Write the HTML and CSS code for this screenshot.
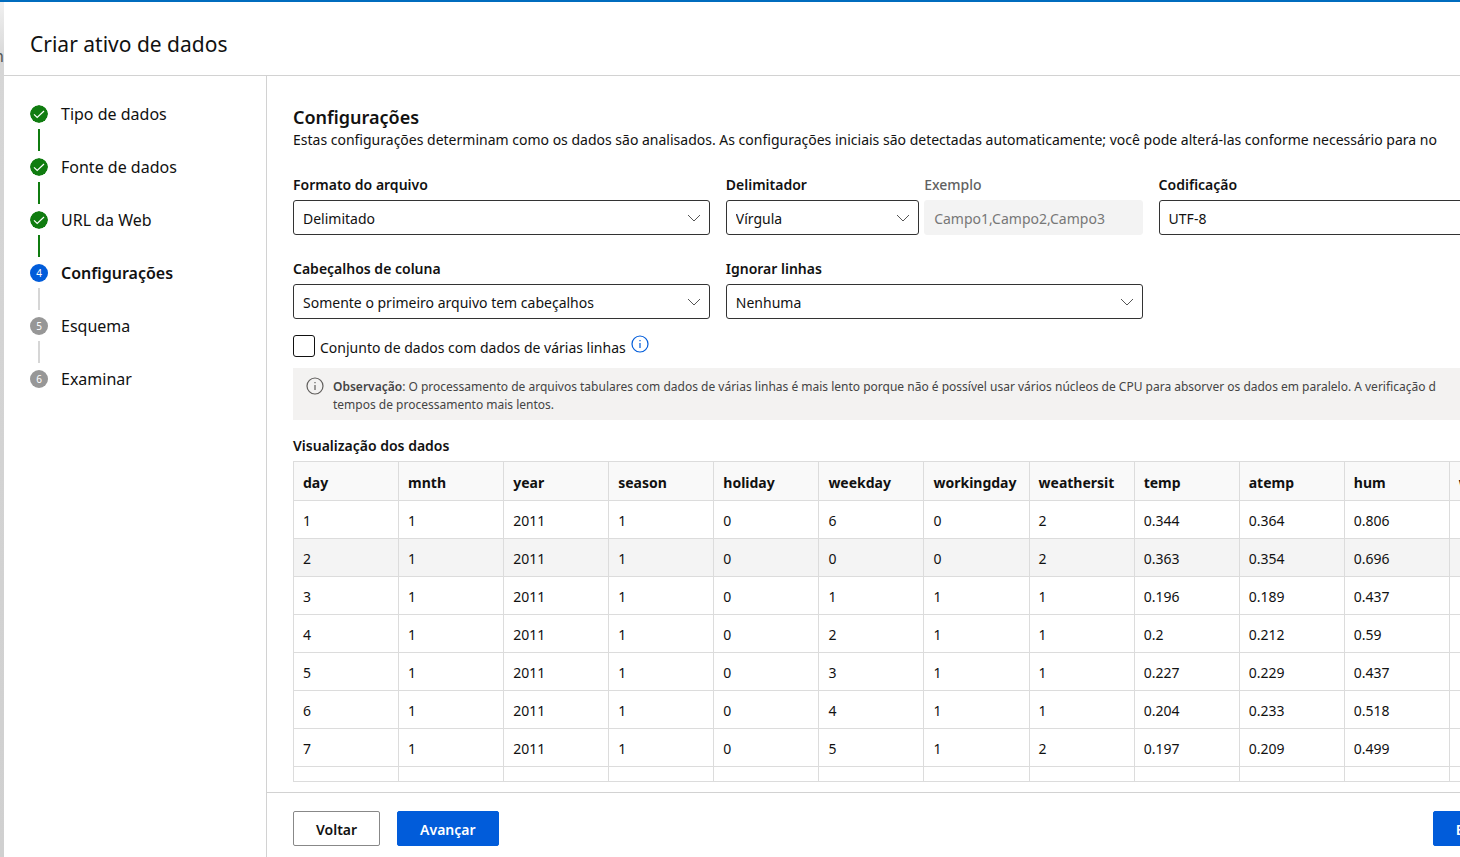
FILE: index.html
```html
<!DOCTYPE html>
<html lang="pt-BR">
<head>
<meta charset="utf-8">
<title>Criar ativo de dados</title>
<link rel="stylesheet" href="styles.css">
</head>
<body>
<svg class="defs" aria-hidden="true">
  <symbol id="check" viewBox="0 0 18 18"><circle cx="9" cy="9" r="9"/><path d="M4 9.300l3.200 3.200L14 6"/></symbol>
  <symbol id="info" viewBox="0 0 18 18"><circle cx="9" cy="9" r="8"/><path d="M9 8v5M9 5v1.300"/></symbol>
</svg>
<div class="app">
  <div class="backdrop"><span class="backdrop-text">h</span></div>
  <div class="panel">
    <header class="panel-header"><h1>Criar ativo de dados</h1></header>
    <div class="panel-body">
      <nav class="sidebar" aria-label="Etapas">
        <ol class="steps">
          <li class="step done"><svg class="dot"><use href="#check"/></svg><span>Tipo de dados</span></li>
          <li class="step done"><svg class="dot"><use href="#check"/></svg><span>Fonte de dados</span></li>
          <li class="step done"><svg class="dot"><use href="#check"/></svg><span>URL da Web</span></li>
          <li class="step current" aria-current="step"><span class="dot">4</span><span>Configurações</span></li>
          <li class="step"><span class="dot">5</span><span>Esquema</span></li>
          <li class="step"><span class="dot">6</span><span>Examinar</span></li>
        </ol>
      </nav>
      <main class="main">
        <section class="content">
          <h2>Configurações</h2>
          <p class="intro">Estas configurações determinam como os dados são analisados. As configurações iniciais são detectadas automaticamente; você pode alterá-las conforme necessário para no</p>
          <form class="fields">
            <div class="field"><label for="format">Formato do arquivo</label><select id="format"><option>Delimitado</option></select></div>
            <div class="pair">
              <div class="field"><label for="delimiter">Delimitador</label><select id="delimiter"><option>Vírgula</option></select></div>
              <div class="field muted"><label for="example">Exemplo</label><input id="example" type="text" value="Campo1,Campo2,Campo3" disabled></div>
            </div>
            <div class="field"><label for="encoding">Codificação</label><select id="encoding"><option>UTF-8</option></select></div>
            <div class="field"><label for="headers">Cabeçalhos de coluna</label><select id="headers"><option>Somente o primeiro arquivo tem cabeçalhos</option></select></div>
            <div class="field"><label for="skip">Ignorar linhas</label><select id="skip"><option>Nenhuma</option></select></div>
          </form>
          <div class="multiline">
            <input id="multiline" type="checkbox"><label for="multiline">Conjunto de dados com dados de várias linhas</label>
            <svg class="info blue"><use href="#info"/></svg>
          </div>
          <div class="note">
            <svg class="info"><use href="#info"/></svg>
            <p><b>Observação</b>: O processamento de arquivos tabulares com dados de várias linhas é mais lento porque não é possível usar vários núcleos de CPU para absorver os dados em paralelo. A verificação d<br>tempos de processamento mais lentos.</p>
          </div>
          <h3>Visualização dos dados</h3>
          <div class="table-wrap">
            <table>
              <thead><tr><th>day</th><th>mnth</th><th>year</th><th>season</th><th>holiday</th><th>weekday</th><th>workingday</th><th>weathersit</th><th>temp</th><th>atemp</th><th>hum</th><th>windspeed</th></tr></thead>
              <tbody>
                <tr><td>1</td><td>1</td><td>2011</td><td>1</td><td>0</td><td>6</td><td>0</td><td>2</td><td>0.344</td><td>0.364</td><td>0.806</td><td></td></tr>
                <tr class="hover"><td>2</td><td>1</td><td>2011</td><td>1</td><td>0</td><td>0</td><td>0</td><td>2</td><td>0.363</td><td>0.354</td><td>0.696</td><td></td></tr>
                <tr><td>3</td><td>1</td><td>2011</td><td>1</td><td>0</td><td>1</td><td>1</td><td>1</td><td>0.196</td><td>0.189</td><td>0.437</td><td></td></tr>
                <tr><td>4</td><td>1</td><td>2011</td><td>1</td><td>0</td><td>2</td><td>1</td><td>1</td><td>0.2</td><td>0.212</td><td>0.59</td><td></td></tr>
                <tr><td>5</td><td>1</td><td>2011</td><td>1</td><td>0</td><td>3</td><td>1</td><td>1</td><td>0.227</td><td>0.229</td><td>0.437</td><td></td></tr>
                <tr><td>6</td><td>1</td><td>2011</td><td>1</td><td>0</td><td>4</td><td>1</td><td>1</td><td>0.204</td><td>0.233</td><td>0.518</td><td></td></tr>
                <tr><td>7</td><td>1</td><td>2011</td><td>1</td><td>0</td><td>5</td><td>1</td><td>2</td><td>0.197</td><td>0.209</td><td>0.499</td><td></td></tr>
                <tr><td></td><td></td><td></td><td></td><td></td><td></td><td></td><td></td><td></td><td></td><td></td><td></td></tr>
              </tbody>
            </table>
          </div>
        </section>
        <footer class="footer">
          <button type="button">Voltar</button>
          <button type="button" class="primary">Avançar</button>
          <button type="button" class="primary last">Enviar</button>
        </footer>
      </main>
    </div>
  </div>
</div>
</body>
</html>
```
FILE: styles.css
```css
* { box-sizing: border-box; }
body {
  margin: 0;
  overflow: hidden;
  background: #fff;
  color: #111;
  font: 14px/20px "Segoe UI", "Noto Sans", sans-serif;
}
h1, h2, h3, p, ol { margin: 0; padding: 0; }
.defs { display: none; }
.app { display: flex; height: 100vh; overflow: hidden; border-top: 2px solid #006cbe; }
.backdrop {
  flex: 0 0 4px;
  overflow: hidden;
  background: linear-gradient(#f0f0f0, #d6d6d6 60px, #d0d0d0);
  display: flex;
  justify-content: flex-end;
  padding-top: 44px;
}
.backdrop-text { color: #555; font-size: 16px; }
.panel { flex: 0 0 109%; display: flex; flex-direction: column; background: #fff; }
.panel-header { padding: 28px 26px 17px; border-bottom: 1px solid #d2d2d2; }
h1 { font-size: 21px; line-height: 28px; font-weight: 400; }
.panel-body { flex: 1; min-height: 0; display: flex; }

.sidebar { flex: 0 0 263px; padding: 29px 26px; border-right: 1px solid #d2d2d2; }
.steps { list-style: none; }
.step {
  display: grid;
  grid-template-columns: 18px 1fr;
  grid-template-rows: 18px 22px;
  row-gap: 6px;
  column-gap: 13px;
  align-items: center;
  height: 53px;
  font-size: 16px;
}
.step:not(:last-child)::after {
  content: "";
  width: 2px;
  height: 22px;
  margin-left: 8px;
  background: #d6d6d6;
}
.step.done::after { background: #107c10; }
.dot {
  width: 18px;
  height: 18px;
  border-radius: 50%;
  background: #979797;
  color: #fff;
  font-size: 10px;
  font-weight: 400;
  line-height: 18px;
  text-align: center;
}
svg.dot { background: none; fill: #107c10; stroke: none; }
#check path { fill: none; stroke: #fff; stroke-width: 1.200; }
.current { font-weight: 600; }
.current .dot { background: #015cda; }

.main { flex: 1; min-width: 0; display: flex; flex-direction: column; }
.content { flex: 1; min-height: 0; display: flex; flex-direction: column; padding: 29px 20px 10px 26px; }
h2 { font-size: 18px; line-height: 24px; font-weight: 600; }
.intro { padding-top: 1px; white-space: nowrap; }
.fields {
  display: grid;
  grid-template-columns: repeat(3, 1fr);
  gap: 24px 16px;
  margin: 25px 0 16px;
}
.field { display: flex; flex-direction: column; gap: 5px; }
.pair { display: grid; grid-template-columns: 193fr 218fr; gap: 5px; }
label { font-weight: 600; }
select, .field input {
  width: 100%;
  height: 35px;
  padding: 2px 9px 0;
  border: 1px solid #333;
  border-radius: 3px;
  background: #fff;
  color: #111;
  font: inherit;
  appearance: none;
}
select {
  background: url("data:image/svg+xml,%3Csvg xmlns='http://www.w3.org/2000/svg' width='14' height='8'%3E%3Cpath d='M1 1l6 6 6-6' fill='none' stroke='%23555'/%3E%3C/svg%3E") no-repeat right 8px center;
}
.muted label { color: #616161; font-weight: 500; }
.field input { border-color: #f3f3f3; background: #f3f3f3; color: #777; }
.multiline { display: flex; align-items: center; height: 22px; gap: 5px; }
.multiline input {
  appearance: none;
  width: 22px;
  height: 22px;
  margin: 0;
  border: 1px solid #111;
  border-radius: 3px;
}
.multiline label { font-weight: 400; padding-top: 3px; }
.info { flex: none; width: 18px; height: 18px; fill: none; stroke: #605e5c; stroke-width: 1.200; }
.info.blue { align-self: flex-start; stroke: #015cda; }
.note {
  display: flex;
  gap: 9px;
  margin: 11px 0 16px;
  padding: 9px 13px 6px;
  background: #f3f2f1;
  color: #444;
  font-size: 12px;
  line-height: 18px;
  white-space: nowrap;
}
.note p { padding-top: 1px; }
.note b { font-weight: 600; }
h3 { font-size: 14px; font-weight: 600; line-height: 20px; margin-bottom: 5px; }

.table-wrap { flex: 1; min-height: 0; overflow: hidden; border-bottom: 1px solid #dcdcdc; }
table { width: 1262px; table-layout: fixed; border-collapse: collapse; }
th, td { height: 38px; padding: 3px 9px 0; border: 1px solid #dcdcdc; text-align: left; }
th { height: 39px; background: #f9f9f9; font-weight: 700; }
.hover { background: #f4f4f4; }

.footer { display: flex; gap: 17px; padding: 18px 26px 11px; border-top: 1px solid #d2d2d2; }
button {
  height: 35px;
  padding: 2px 22px 0;
  border: 1px solid #888;
  border-radius: 2px;
  background: #fff;
  color: #111;
  font: inherit;
  font-weight: 600;
}
.primary { border-color: #015cda; background: #015cda; color: #fff; }
.last { margin-left: auto; margin-right: 48px; }
```
